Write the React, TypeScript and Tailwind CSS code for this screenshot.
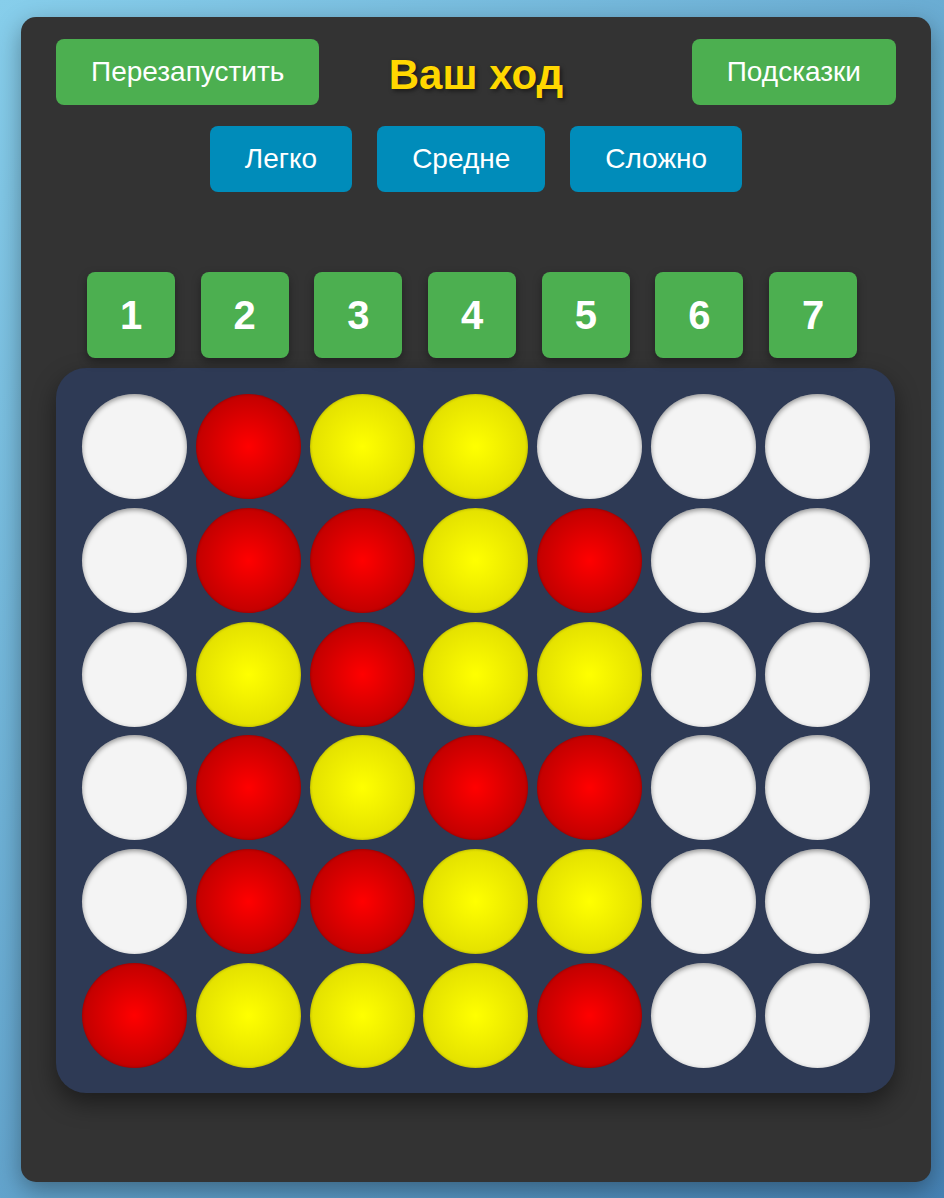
const board: string[] = [
  "WRYYWWW",
  "WRRYRWW",
  "WYRYYWW",
  "WRYRRWW",
  "WRRYYWW",
  "RYYYRWW",
];

function Cell({ c }: { c: string }) {
  if (c === "R") {
    return (
      <div className="w-[105px] h-[105px] rounded-full bg-[radial-gradient(circle,#ff0000_0%,#a80000_100%)] shadow-[inset_0_0_3px_rgba(0,0,0,0.3)]" />
    );
  }
  if (c === "Y") {
    return (
      <div className="w-[105px] h-[105px] rounded-full bg-[radial-gradient(circle,#ffff00_0%,#d8d400_100%)] shadow-[inset_0_0_3px_rgba(0,0,0,0.3)]" />
    );
  }
  return (
    <div className="w-[105px] h-[105px] rounded-full bg-[#f4f4f4] shadow-[inset_0_2px_5px_rgba(0,0,0,0.4)]" />
  );
}

export default function App() {
  return (
    <div className="min-h-[1198px] w-full bg-[linear-gradient(135deg,#87ceeb,#4682b4)] pl-[21px] pt-[17px] pb-[16px] font-[Liberation_Sans,Arial,sans-serif]">

      {/* CARD */}
      <div className="w-[910px] h-[1165px] bg-[#333333] rounded-[15px] shadow-[0_8px_24px_rgba(0,0,0,0.35)] px-[35px] pt-[22px]">

        {/* HEADER */}
        <div className="grid grid-cols-[1fr_auto_1fr] items-center">
          <button className="justify-self-start bg-[#4caf50] text-white text-[28px] leading-[32px] px-[35px] py-[17px] rounded-[8px]">
            Перезапустить
          </button>
          <h1 className="text-[42px] font-bold text-[#ffd700] [text-shadow:2px_2px_4px_rgba(0,0,0,0.5)] leading-[48px] mt-[6px]">
            Ваш ход
          </h1>
          <button className="justify-self-end bg-[#4caf50] text-white text-[28px] leading-[32px] px-[35px] py-[17px] rounded-[8px]">
            Подсказки
          </button>
        </div>

        {/* DIFFICULTY */}
        <div className="flex justify-center gap-[25px] mt-[21px]">
          {["Легко", "Средне", "Сложно"].map((d) => (
            <button
              key={d}
              className="bg-[#008cba] text-white text-[28px] leading-[32px] px-[35px] py-[17px] rounded-[8px]"
            >
              {d}
            </button>
          ))}
        </div>

        {/* COLUMN BUTTONS */}
        <div className="flex gap-[25.7px] pl-[31px] mt-[80px]">
          {[1, 2, 3, 4, 5, 6, 7].map((n) => (
            <button
              key={n}
              className="w-[88px] h-[86px] bg-[#4caf50] text-white text-[40px] font-bold rounded-[8px] shadow-[0_4px_10px_rgba(0,0,0,0.35)] flex items-center justify-center"
            >
              {n}
            </button>
          ))}
        </div>

        {/* BOARD */}
        <div className="mt-[10px] w-[839px] bg-[#2e3a55] rounded-[30px] shadow-[0_10px_25px_rgba(0,0,0,0.45)] p-[26px] pr-[24px] pb-[25px] grid grid-cols-[repeat(7,105px)] gap-x-[8.8px] gap-y-[8.8px]">
          {board.map((row, r) =>
            row.split("").map((c, i) => <Cell key={r + "-" + i} c={c} />)
          )}
        </div>

      </div>
    </div>
  );
}
